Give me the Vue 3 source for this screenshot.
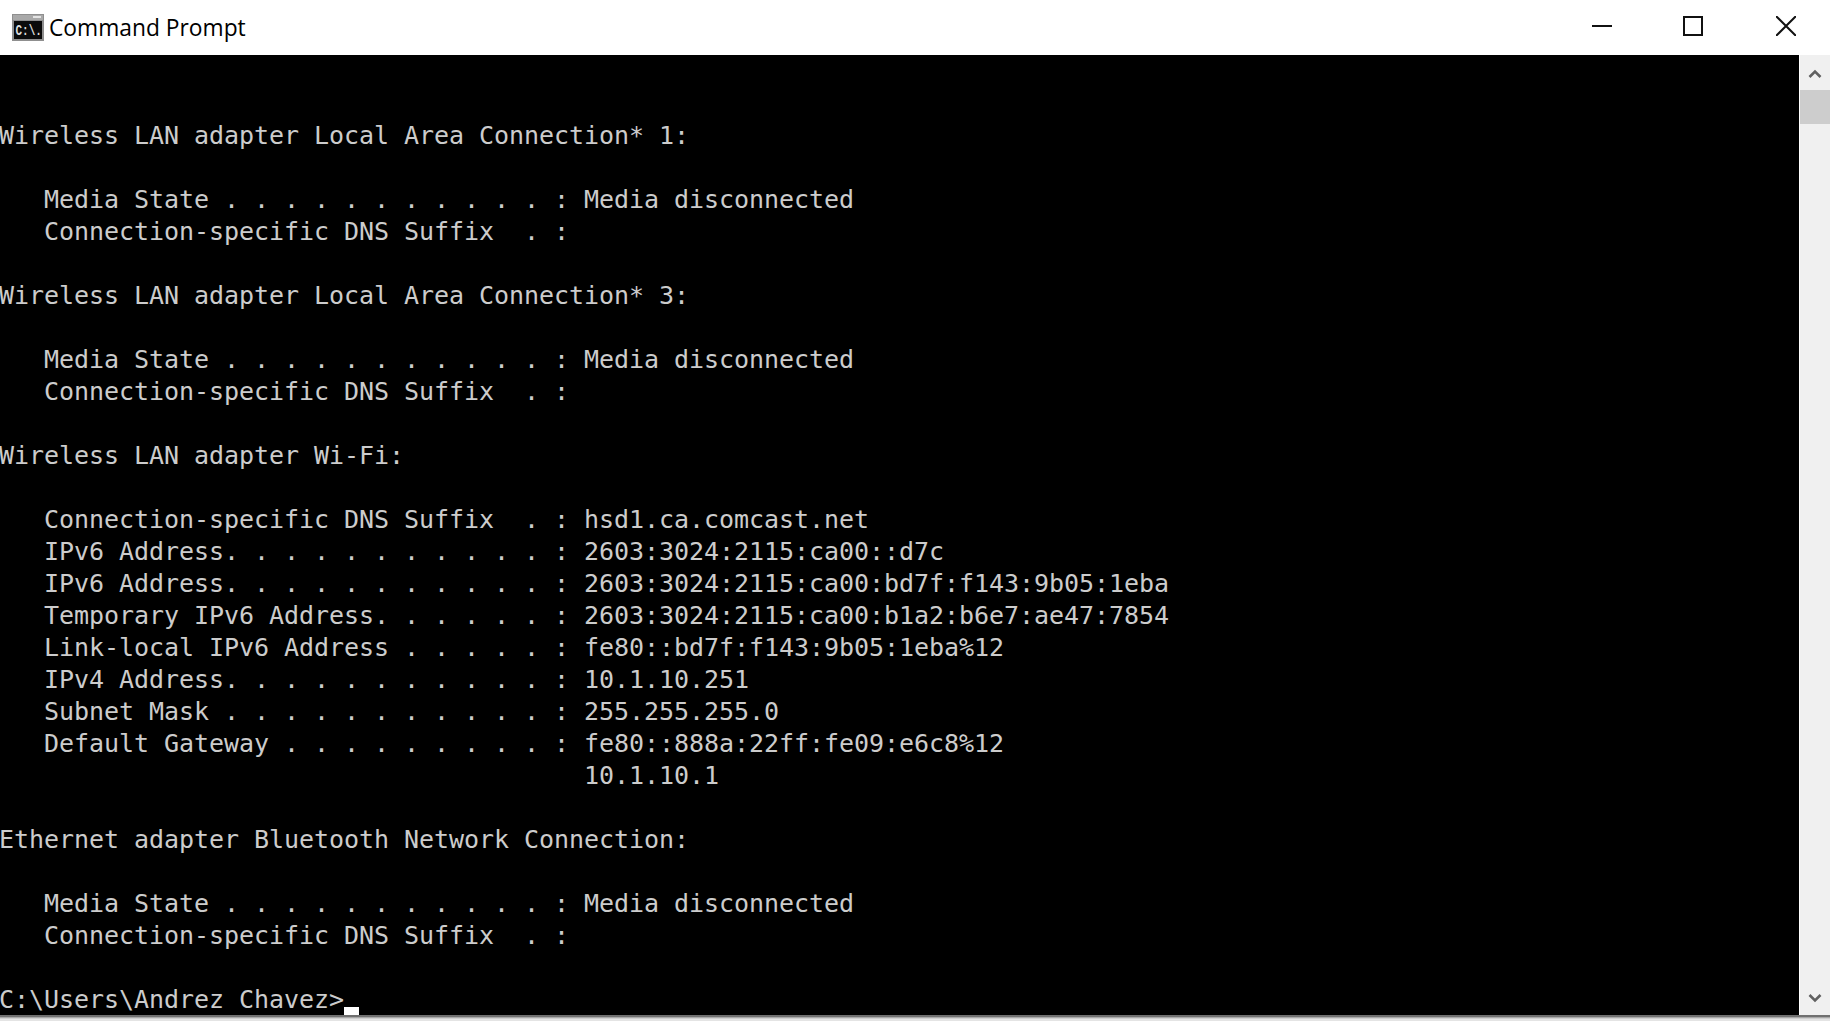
<script setup>
const lines = [
  '',
  '',
  'Wireless LAN adapter Local Area Connection* 1:',
  '',
  '   Media State . . . . . . . . . . . : Media disconnected',
  '   Connection-specific DNS Suffix  . :',
  '',
  'Wireless LAN adapter Local Area Connection* 3:',
  '',
  '   Media State . . . . . . . . . . . : Media disconnected',
  '   Connection-specific DNS Suffix  . :',
  '',
  'Wireless LAN adapter Wi-Fi:',
  '',
  '   Connection-specific DNS Suffix  . : hsd1.ca.comcast.net',
  '   IPv6 Address. . . . . . . . . . . : 2603:3024:2115:ca00::d7c',
  '   IPv6 Address. . . . . . . . . . . : 2603:3024:2115:ca00:bd7f:f143:9b05:1eba',
  '   Temporary IPv6 Address. . . . . . : 2603:3024:2115:ca00:b1a2:b6e7:ae47:7854',
  '   Link-local IPv6 Address . . . . . : fe80::bd7f:f143:9b05:1eba%12',
  '   IPv4 Address. . . . . . . . . . . : 10.1.10.251',
  '   Subnet Mask . . . . . . . . . . . : 255.255.255.0',
  '   Default Gateway . . . . . . . . . : fe80::888a:22ff:fe09:e6c8%12',
  '                                       10.1.10.1',
  '',
  'Ethernet adapter Bluetooth Network Connection:',
  '',
  '   Media State . . . . . . . . . . . : Media disconnected',
  '   Connection-specific DNS Suffix  . :',
  '',
]
</script>

<template>
  <div class="window">
    <header class="titlebar">
      <svg class="app-icon" width="32" height="27" viewBox="0 0 32 27">
        <rect x="0" y="0" width="32" height="27" fill="#8f8f8f" />
        <rect x="1" y="1" width="30" height="5" fill="#a9a9a9" />
        <rect x="21" y="2" width="8" height="2" fill="#e4e4e4" />
        <rect x="2" y="7" width="28" height="18" fill="#0b0b0b" />
        <text transform="translate(3.5 21) scale(1 1.35)" class="icon-text">C:\.</text>
      </svg>
      <span class="title">Command Prompt</span>
      <div class="controls">
        <svg class="ctl" width="20" height="20" viewBox="0 0 20 20"><path d="M0 10h20" stroke="#111" stroke-width="2" /></svg>
        <svg class="ctl" width="20" height="20" viewBox="0 0 20 20"><rect x="1" y="1" width="18" height="18" fill="none" stroke="#111" stroke-width="2" /></svg>
        <svg class="ctl close" width="20" height="20" viewBox="0 0 20 20"><path d="M0 0L20 20M20 0L0 20" stroke="#111" stroke-width="2" /></svg>
      </div>
    </header>
    <div class="body">
      <main class="console">
        <div v-for="(line, i) in lines" :key="i" class="row">{{ line }}</div>
        <div class="row prompt">C:\Users\Andrez Chavez&gt;<span class="cursor"></span></div>
      </main>
      <aside class="scrollbar">
        <button class="arrow up">
          <svg width="14" height="10" viewBox="0 0 14 10"><path d="M1.5 8L7 2.5L12.5 8" fill="none" stroke="#606060" stroke-width="2.6" /></svg>
        </button>
        <div class="thumb"></div>
        <div class="track"></div>
        <button class="arrow">
          <svg width="14" height="10" viewBox="0 0 14 10"><path d="M1.5 2L7 7.5L12.5 2" fill="none" stroke="#606060" stroke-width="2.6" /></svg>
        </button>
      </aside>
    </div>
    <footer class="edge"></footer>
  </div>
</template>

<style>
html, body { margin: 0; background: #fff; overflow: hidden; }
</style>

<style scoped>
.window {
  width: 1830px;
  height: 1021px;
  display: flex;
  flex-direction: column;
  overflow: hidden;
  background: #fff;
}
.titlebar {
  height: 55px;
  flex: none;
  display: flex;
  align-items: center;
  padding-left: 12px;
  box-sizing: border-box;
}
.app-icon { flex: none; margin-right: 5px; }
.icon-text { font: bold 11px "Liberation Mono", monospace; fill: #ddd; }
.title {
  font: 22.8px/1 "Open Sans", "Noto Sans", sans-serif;
  color: #000;
  margin-top: 2px;
}
.controls {
  margin-left: auto;
  display: flex;
  align-items: center;
  padding: 0 34px 3px 0;
  gap: 71px;
}
.close { margin-left: 2px; }
.ctl { display: block; }
.body {
  height: 960px;
  flex: none;
  display: flex;
}
.console {
  flex: 1;
  background: #000;
  color: #cccccc;
  font-family: "DejaVu Sans Mono", monospace;
  font-size: 25px;
  line-height: 34px;
  letter-spacing: -0.05px;
  white-space: pre;
  overflow: hidden;
}
.row { height: 32px; margin-left: -1px; }
.prompt { position: relative; }
.cursor {
  position: absolute;
  bottom: 0;
  width: 15px;
  height: 8px;
  background: #fff;
}
.scrollbar {
  width: 31px;
  flex: none;
  display: flex;
  flex-direction: column;
  background: #f0f0f0;
  border-left: 1px solid #fff;
  box-sizing: border-box;
}
.arrow {
  height: 35px;
  flex: none;
  padding: 0;
  border: 0;
  background: #f0f0f0;
  display: flex;
  align-items: center;
  justify-content: center;
}
.up { padding-top: 2px; box-sizing: border-box; }
.thumb { height: 34px; flex: none; background: #cdcdcd; }
.track { flex: 1; }
.edge {
  height: 6px;
  flex: none;
  background: linear-gradient(#707070 0 2px, #a8a8a8 2px 3px, #cfcfcf 3px 4px, #e4e4e4 4px);
}
</style>
